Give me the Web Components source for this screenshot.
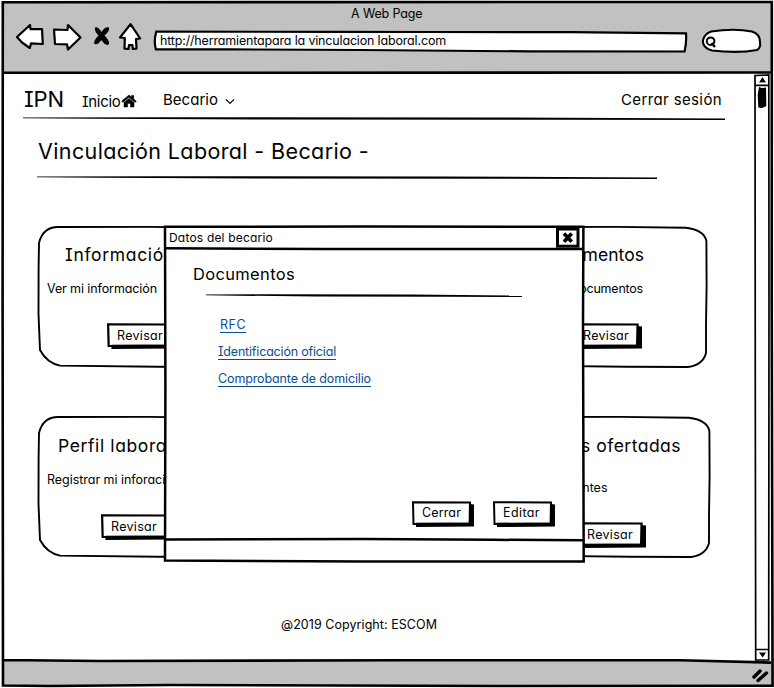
<!DOCTYPE html>
<html lang="es"><head><meta charset="utf-8"><title>A Web Page</title>
<style>html,body{margin:0;background:#fff}body{width:774px;height:688px;overflow:hidden;font-family:Inter,Lato,sans-serif;color:#000}</style>
</head><body><browser-window></browser-window>
<script>
const define=(name,html,after)=>customElements.define(name,class extends HTMLElement{
  connectedCallback(){
    if(this.shadowRoot)return;
    const t=document.createElement('template');
    t.innerHTML=typeof html==='function'?html(this):html;
    this.attachShadow({mode:'open'}).append(t.content.cloneNode(true));
    if(after)after(this);
  }
});

/* A run of text letter-spaced to an exact width: s = font size, w = width */
define('fit-text',e=>`<style>:host{display:block;flex:none;white-space:pre;font-size:${e.getAttribute('s')}px;line-height:1;height:${e.getAttribute('s')}px;width:${e.getAttribute('w')}px;font-feature-settings:"cv11","cv08";font-weight:400}span{display:inline-block}</style><span>${e.getAttribute('t')}</span>`,e=>{
  const s=e.shadowRoot.querySelector('span'),n=s.textContent.length;
  const d=(+e.getAttribute('w')-s.getBoundingClientRect().width)/n;
  s.style.letterSpacing=d+'px';
});

/* Hand-drawn horizontal rule */
define('sketch-rule',e=>{const w=+e.getAttribute('w');return `<style>:host{display:block;flex:none;height:4px;width:${w}px}svg{display:block}</style><svg width="${w}" height="4"><path d="M0 .4 L${w*.2} .3 L${w*.65} .4 L${w} 1.6 L${w} 2.9 L${w*.75} 2.8 L${w*.35} 2.5 L${w*.1} 1.7 L0 1.2Z"/></svg>`});

define('sketch-button',`<style>:host{display:grid;flex:none;width:62px;height:27px}svg,slot{grid-area:1/1}slot{display:block;padding:6px 0 0 10px}</style>
<svg width="100%" height="27" viewBox="0 0 62 27" preserveAspectRatio="none"><path d="M4 22 L58 22 L58 3 L62 3.5 L62 25.6 L4 26Z"/><path d="M1 1.2 L58 1.5 L57.6 22.5 L1.5 23Z" fill="#fff" stroke="#000" stroke-width="2"/><path d="M4 23H60" stroke="#000" stroke-width="2.4"/></svg><slot></slot>`);

define('sketch-card',`<style>:host{display:grid;flex:none;width:200px;height:142px}svg,div{grid-area:1/1}svg{overflow:visible}div{display:flex;flex-direction:column;align-items:flex-start}</style>
<svg width="200" height="142"><path d="M20 1 Q5 1 1 17 L.6 42 L.5 88 L2 124 Q9 137 22 139.6 L120 140.8 L181 141 Q196 139 199 127 L199 100 L199.6 60 L199.4 15 Q197 4 179 1.8 L110 .9Z" fill="#fff" stroke="#000" stroke-width="1.9"/></svg><div><slot></slot></div>`);

define('sketch-toolbar',`<style>
:host{display:block;height:74px}.title{height:30px;padding:8px 0 0 351px;box-sizing:border-box}
.row{display:flex;align-items:flex-start;height:36px}.icons{width:153px}
.url{display:grid;width:549px}.url>*{grid-area:1/1}.url fit-text{margin:5px 0 0 7px}svg{display:block;flex:none}.icons{margin-top:-10px}</style>
<div class="title"><fit-text s="12.5" w="71.5" t="A Web Page"></fit-text></div>
<div class="row">
<svg class="icons" width="153" height="36" viewBox="0 20 153 36"><g fill="#fff" stroke="#000" stroke-width="2.2" stroke-linejoin="round"><path d="M17 37 L30 25 L30.5 29.2 L42 29 L42.8 44 L31 43.4 L29.8 48 L22 42.5Z"/><path d="M54 29.5 L67.5 30 L68 25 L80.5 37.5 L68 49.5 L67 44.3 L55 44Z"/><path d="M130.5 24.2 L120 37.5 L124.8 38 L124.5 48.7 L128.5 49 L129 45 L132.5 45.2 L132.7 49 L136.5 48.6 L136 39 L140.2 38.5Z"/></g><path d="M95 27.5 Q98 26 101.5 32 Q105 26 109 27.5 Q110 31 104.5 35.5 Q110 41 109 44 Q106 47 101.5 40 Q97 46 94 43.5 Q94 40 98.5 35.5 Q94 31 95 27.5Z"/></svg>
<div class="url"><svg width="549" height="36" viewBox="153 30 549 36"><path d="M156.3 31.6 L330 31.9 L430 32 L570 32.2 L686 33.4 Q686.7 42 684.6 51.5 L530 51.4 L360 50 L230 49.4 L155.8 49.3 Q153.6 40 156.3 31.6Z" fill="#fff" stroke="#000" stroke-width="2.2"/></svg><fit-text s="12.5" w="286" t="http://herramientapara la vinculacion laboral.com"></fit-text></div>
<svg width="66" height="36" viewBox="702 30 66 36" style="overflow:visible"><path d="M711 31.5 Q734 28 752 31.5 Q760 34 760 42 Q761 48 757 50 Q738 53.5 712 50.5 Q703 48 702.8 41 Q704 34 711 31.5Z" fill="#fff" stroke="#000" stroke-width="2.1"/><circle cx="710.6" cy="41.2" r="3.8" fill="none" stroke="#000" stroke-width="2"/><path d="M711.5 43 L715 47" stroke="#000" stroke-width="2.4"/></svg>
</div>`);

define('sketch-scrollbar',`<style>:host{display:block;width:16px}svg{display:block}</style>
<svg width="16" height="588" viewBox="754 74 16 588"><g fill="#fff" stroke="#000" stroke-width="1.7"><path d="M755 75.5 L768.8 75 L769 300 L768.7 660 L755.7 660 L755.3 400Z"/><path d="M755 85.3H769M755 649.5H769" /></g><path d="M759 82.5 L762.5 77.2 L766 82.3Z M759 652.5 L766 652.5 L762.7 657.5Z"/><path d="M759 87 Q762 88.5 766 87.5 L766.3 106 Q762 109 758.3 107.3 L757.7 95Z"/></svg>`);

define('nav-bar',`<style>:host{display:block;height:46px;padding-left:23px}.row{display:flex;height:43px;align-items:flex-start}svg{flex:none}</style>
<div class="row"><fit-text s="22" w="40" t="IPN" style="margin:14px 0 0 1px"></fit-text>
<fit-text s="15" w="38.5" t="Inicio" style="margin:20px 0 0 18px"></fit-text>
<svg width="16" height="14" viewBox="0 0 16 14" style="margin:20px 0 0 .5px"><path d="M.7 7.1 L8 1 L10.4 3 V1.4 H12.7 V5 L15.3 7.2 L14.2 8.4 L8 3.3 L1.8 8.4Z M3 8.5 L8 4.4 L13 8.5 V13 H9.5 V9.4 H6.6 V13 H3Z" stroke="#000" stroke-width=".5"/></svg>
<fit-text s="15" w="55" t="Becario" style="margin:18px 0 0 26px"></fit-text>
<svg width="10" height="7" viewBox="0 0 10 7" style="margin:24px 0 0 7px"><path d="M1 1.3 L5 5.3 L9 1.3" fill="none" stroke="#000" stroke-width="1.2"/></svg>
<fit-text s="15" w="101" t="Cerrar sesión" style="margin:18px 0 0 386px"></fit-text></div>
<sketch-rule w="702"></sketch-rule>`);

define('text-link',e=>`<style>:host{display:block;color:#0c4d92}a{display:block;width:max-content;border-bottom:1px solid #0c4d92;padding-bottom:.5px;color:inherit;text-decoration:none}</style><a><fit-text s="12.5" w="${e.getAttribute('w')}" t="${e.getAttribute('t')}"></fit-text></a>`);

define('modal-dialog',`<style>:host{display:grid;width:422px;height:338px}:host>svg,.c{grid-area:1/1}.c{display:flex;flex-direction:column;align-items:flex-start}
.bar{display:flex;justify-content:space-between;width:417px;height:24px}.btns{display:flex;gap:19px;margin:114px 0 0 249px}text-link{margin-bottom:13px}</style>
<svg width="422" height="338"><g stroke="#000" stroke-width="2.5" fill="#fff"><path d="M2 1.8 L200 1.5 L420.4 1.8 L420 100 L420.7 336.6 L200 336.4 L2 335.5 L2.4 160Z"/><path d="M2 23.2 L160 24 L420 24 M2 314.4 L200 314.1 L330 314.8 L420 315.2"/></g></svg>
<div class="c"><div class="bar"><fit-text s="12" w="104" t="Datos del becario" style="margin:7px 0 0 6px"></fit-text>
<svg width="24" height="21" style="margin-top:2px"><rect x="1.5" y="2" width="20.5" height="17.2" fill="#fff" stroke="#000" stroke-width="3"/><path d="M8 6.5 L15.7 14.7 M15.7 6.5 L8 14.7" stroke="#000" stroke-width="3.6"/></svg></div>
<fit-text s="16.5" w="102" t="Documentos" style="margin:17px 0 0 30px"></fit-text>
<sketch-rule w="316" style="margin:11.5px 0 0 43px"></sketch-rule>
<text-link t="RFC" w="26" style="margin-left:57px;margin-top:21px"></text-link>
<text-link t="Identificación oficial" w="118" style="margin-left:55px"></text-link>
<text-link t="Comprobante de domicilio" w="153" style="margin-left:55px;margin-bottom:0"></text-link>
<div class="btns"><sketch-button><fit-text s="12.5" w="39" t="Cerrar"></fit-text></sketch-button><sketch-button><fit-text s="12.5" w="37" t="Editar"></fit-text></sketch-button></div>
</div>`);

define('scholar-page',`<style>:host{display:flex;flex-direction:column;align-items:flex-start;width:754px}.row{display:flex;justify-content:space-between;margin-left:38px}.row sketch-button{width:69px}.row sketch-button fit-text{margin-top:.6px}</style>
<nav-bar></nav-bar>
<fit-text s="21.5" w="331" t="Vinculación Laboral - Becario -" style="margin:21px 0 0 38px"></fit-text>
<sketch-rule w="620" style="margin:13.5px 0 0 37px"></sketch-rule>
<div class="row" style="width:669px;margin-top:46px">
<sketch-card><fit-text s="17.5" w="110" t="Información" style="margin:20px 0 0 27px"></fit-text><fit-text s="12.5" w="110" t="Ver mi información" style="margin:19px 0 0 9px"></fit-text><sketch-button style="margin:28px 0 0 69px"><fit-text s="12.5" w="46" t="Revisar"></fit-text></sketch-button></sketch-card>
<sketch-card><fit-text s="17.5" w="105" t="Documentos" style="margin:20px 0 0 32px"></fit-text><fit-text s="12.5" w="117" t="Ver mis documentos" style="margin:19px 0 0 19px"></fit-text><sketch-button style="margin:28px 0 0 66px"><fit-text s="12.5" w="46" t="Revisar"></fit-text></sketch-button></sketch-card></div>
<div class="row" style="width:672px;margin-top:48px">
<sketch-card><fit-text s="17.5" w="114" t="Perfil laboral" style="margin:21px 0 0 20px"></fit-text><fit-text s="12.5" w="133" t="Registrar mi inforación" style="margin:19px 0 0 9px"></fit-text><sketch-button style="margin:28px 0 0 63px"><fit-text s="12.5" w="46" t="Revisar"></fit-text></sketch-button></sketch-card>
<sketch-card><fit-text s="17.5" w="172" t="Vacantes ofertadas" style="margin:21px 0 0 -1px"></fit-text><fit-text s="12.5" w="78" t="Ver vacantes" style="margin:27px 0 0 19.5px"></fit-text><sketch-button style="margin:28px 0 0 67px"><fit-text s="12.5" w="46" t="Revisar"></fit-text></sketch-button></sketch-card></div>
<fit-text s="12.5" w="156" t="@2019 Copyright: ESCOM" style="margin:61px 0 0 281px"></fit-text>`);

define('browser-window',`<style>:host{display:grid;position:relative;width:774px;height:688px}:host>svg,.c{grid-area:1/1}.main{display:flex;height:588px}modal-dialog{position:absolute;left:163px;top:225px}</style>
<svg width="774" height="688"><path d="M2.8 2 L300 2.1 L772 2 L771.8 300 L772.5 685.7 L300 685.5 L3 686 L2.8 300Z" fill="#c1c1c1"/><path d="M3 73H771V662.5L700 661.2L600 660.5H3Z" fill="#fff"/><path d="M2.8 2.2 L300 2.1 L771.8 2 L771.7 300 L772.6 685.7 L500 686 L170 685 L50 686 L3 685.5 L2.6 300Z M3 72.5 L140 72.8 L771 72.5 M3 660 L100 661 L400 660.2 L680 660.3 L771 662.6" fill="none" stroke="#000" stroke-width="2.6"/><path d="M754 677 L760 671 M758 680.5 L766.5 673" stroke="#000" stroke-width="3.4" stroke-linecap="round"/></svg>
<div class="c"><sketch-toolbar></sketch-toolbar><div class="main"><scholar-page></scholar-page><sketch-scrollbar></sketch-scrollbar></div></div>
<modal-dialog></modal-dialog>`);
</script></body></html>
